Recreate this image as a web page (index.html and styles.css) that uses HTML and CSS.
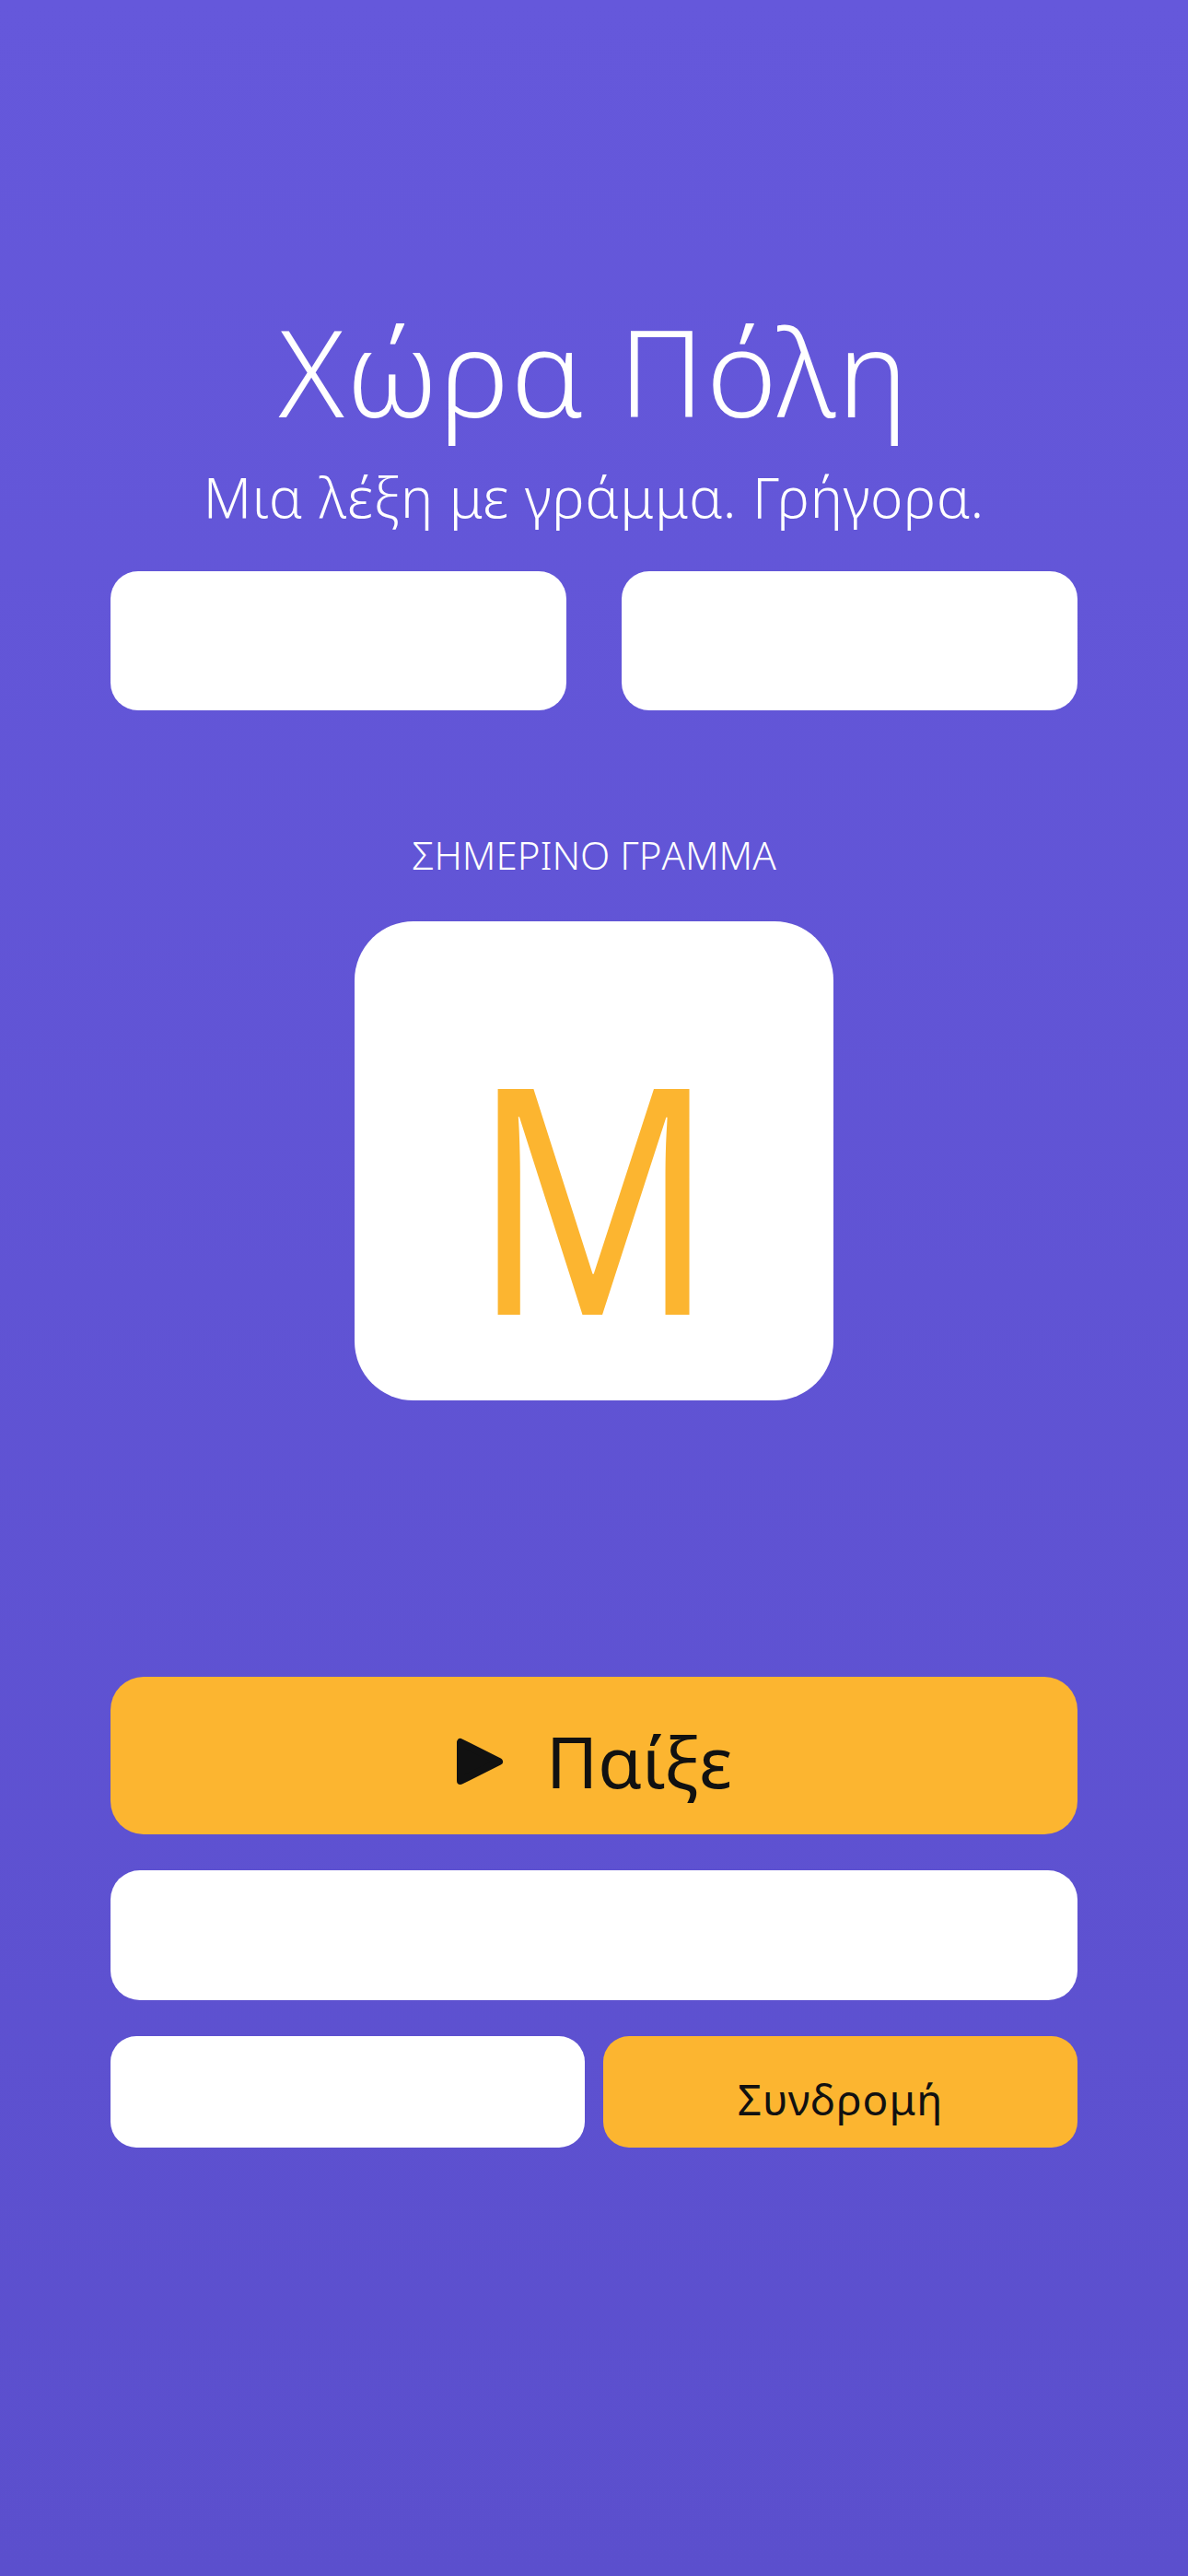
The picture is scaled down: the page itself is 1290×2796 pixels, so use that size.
FILE: index.html
```html
<!DOCTYPE html>
<html lang="el">
<head>
<meta charset="utf-8">
<title>Χώρα Πόλη</title>
<link rel="stylesheet" href="styles.css">
</head>
<body>
<main class="screen">
  <h1 class="title">Χώρα Πόλη</h1>
  <p class="subtitle">Μια λέξη με γράμμα. Γρήγορα.</p>
  <div class="stats">
    <div class="stat-card"></div>
    <div class="stat-card"></div>
  </div>
  <p class="label">ΣΗΜΕΡΙΝΟ ΓΡΑΜΜΑ</p>
  <div class="letter-card"><span class="letter">Μ</span></div>
  <button class="btn btn-play">
    <svg class="play-icon" viewBox="0 0 52 52" aria-hidden="true"><polygon points="5,5 5,47 47,26" fill="#111" stroke="#111" stroke-width="8" stroke-linejoin="round"/></svg>
    <span>Παίξε</span>
  </button>
  <div class="wide-card"></div>
  <div class="bottom-row">
    <div class="small-card"></div>
    <button class="btn btn-sub">Συνδρομή</button>
  </div>
</main>
</body>
</html>
```

FILE: styles.css
```css
html, body {
  margin: 0;
  padding: 0;
}
body {
  width: 1290px;
  min-height: 2796px;
  background: linear-gradient(180deg, #6558db 0%, #5b4fcd 100%);
  font-family: "Noto Sans", "DejaVu Sans", sans-serif;
  color: #fff;
}
.screen {
  box-sizing: border-box;
  padding: 338px 120px 0;
  display: flex;
  flex-direction: column;
  align-items: stretch;
}
.title {
  margin: 0;
  font-size: 130px;
  line-height: 130px;
  font-weight: 350;
  letter-spacing: 2px;
  text-align: center;
}
.subtitle {
  margin: 41px 0 0;
  font-size: 60px;
  line-height: 60px;
  font-weight: 350;
  letter-spacing: 1px;
  text-align: center;
}
.stats {
  margin-top: 51px;
  display: grid;
  grid-template-columns: 1fr 1fr;
  gap: 60px;
}
.stat-card {
  height: 151px;
  background: #fff;
  border-radius: 30px;
}
.label {
  margin: 136px 0 0;
  font-size: 42px;
  line-height: 42px;
  font-weight: 350;
  text-align: center;
}
.letter-card {
  margin: 51px auto 0;
  width: 520px;
  height: 520px;
  background: #fff;
  border-radius: 64px;
  display: flex;
  justify-content: center;
  align-items: center;
}
.letter {
  display: inline-block;
  color: #fcb530;
  font-size: 343px;
  line-height: 1;
  font-weight: 400;
  transform: scaleX(0.85);
  padding-top: 66px;
}
.btn {
  border: none;
  font-family: inherit;
  color: #111;
  background: #fcb530;
  cursor: pointer;
}
.btn-play {
  margin-top: 300px;
  height: 171px;
  border-radius: 36px;
  display: flex;
  align-items: center;
  justify-content: center;
  gap: 46px;
  font-size: 77px;
  padding: 12px 0 0;
}
.play-icon {
  width: 52px;
  height: 52px;
}
.wide-card {
  margin-top: 39px;
  height: 141px;
  background: #fff;
  border-radius: 32px;
}
.bottom-row {
  margin-top: 39px;
  display: grid;
  grid-template-columns: 1fr 1fr;
  gap: 20px;
}
.small-card {
  height: 121px;
  background: #fff;
  border-radius: 28px;
}
.btn-sub {
  height: 121px;
  border-radius: 28px;
  font-size: 46px;
  letter-spacing: 1px;
  padding: 14px 0 0;
}
```
